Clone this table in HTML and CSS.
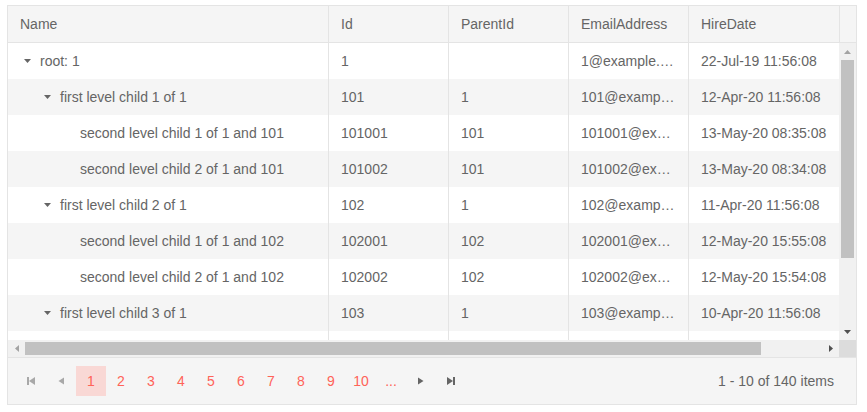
FILE: index.html
```html
<!DOCTYPE html>
<html lang="en">
<head>
<meta charset="utf-8">
<title>TreeList</title>
<link rel="stylesheet" href="styles.css">
</head>
<body>
<div class="grid">
  <div class="head">
    <div class="cols">
      <div class="hcell">Name</div>
      <div class="hcell">Id</div>
      <div class="hcell">ParentId</div>
      <div class="hcell">EmailAddress</div>
      <div class="hcell">HireDate</div>
    </div>
    <div class="head-gap"></div>
  </div>
  <div class="body">
    <div class="rows">
      <div class="row cols">
        <div class="cell name"><span class="caret"><svg viewBox="0 0 16 16" width="16" height="16"><polygon points="4,6 11,6 7.5,10" fill="#656565"/></svg></span>root: 1</div>
        <div class="cell">1</div><div class="cell"></div><div class="cell">1@example.com</div><div class="cell">22-Jul-19 11:56:08</div>
      </div>
      <div class="row cols alt">
        <div class="cell name"><span class="indent"></span><span class="caret"><svg viewBox="0 0 16 16" width="16" height="16"><polygon points="4,6 11,6 7.5,10" fill="#656565"/></svg></span>first level child 1 of 1</div>
        <div class="cell">101</div><div class="cell">1</div><div class="cell">101@example.com</div><div class="cell">12-Apr-20 11:56:08</div>
      </div>
      <div class="row cols">
        <div class="cell name"><span class="indent"></span><span class="indent"></span><span class="indent"></span>second level child 1 of 1 and 101</div>
        <div class="cell">101001</div><div class="cell">101</div><div class="cell">101001@example.com</div><div class="cell">13-May-20 08:35:08</div>
      </div>
      <div class="row cols alt">
        <div class="cell name"><span class="indent"></span><span class="indent"></span><span class="indent"></span>second level child 2 of 1 and 101</div>
        <div class="cell">101002</div><div class="cell">101</div><div class="cell">101002@example.com</div><div class="cell">13-May-20 08:34:08</div>
      </div>
      <div class="row cols">
        <div class="cell name"><span class="indent"></span><span class="caret"><svg viewBox="0 0 16 16" width="16" height="16"><polygon points="4,6 11,6 7.5,10" fill="#656565"/></svg></span>first level child 2 of 1</div>
        <div class="cell">102</div><div class="cell">1</div><div class="cell">102@example.com</div><div class="cell">11-Apr-20 11:56:08</div>
      </div>
      <div class="row cols alt">
        <div class="cell name"><span class="indent"></span><span class="indent"></span><span class="indent"></span>second level child 1 of 1 and 102</div>
        <div class="cell">102001</div><div class="cell">102</div><div class="cell">102001@example.com</div><div class="cell">12-May-20 15:55:08</div>
      </div>
      <div class="row cols">
        <div class="cell name"><span class="indent"></span><span class="indent"></span><span class="indent"></span>second level child 2 of 1 and 102</div>
        <div class="cell">102002</div><div class="cell">102</div><div class="cell">102002@example.com</div><div class="cell">12-May-20 15:54:08</div>
      </div>
      <div class="row cols alt">
        <div class="cell name"><span class="indent"></span><span class="caret"><svg viewBox="0 0 16 16" width="16" height="16"><polygon points="4,6 11,6 7.5,10" fill="#656565"/></svg></span>first level child 3 of 1</div>
        <div class="cell">103</div><div class="cell">1</div><div class="cell">103@example.com</div><div class="cell">10-Apr-20 11:56:08</div>
      </div>
      <div class="row cols">
        <div class="cell name"><span class="indent"></span><span class="indent"></span><span class="indent"></span>second level child 1 of 1 and 103</div>
        <div class="cell">103001</div><div class="cell">103</div><div class="cell">103001@example.com</div><div class="cell">14-May-20 09:12:08</div>
      </div>
    </div>
    <div class="vbar">
      <div class="sb-btn"><svg width="7" height="4" viewBox="0 0 7 4"><polygon points="0,4 7,4 3.5,0" fill="#a3a3a3"/></svg></div>
      <div class="vtrack"><div class="vthumb"></div></div>
      <div class="sb-btn"><svg width="7" height="4" viewBox="0 0 7 4"><polygon points="0,0 7,0 3.5,4" fill="#505050"/></svg></div>
    </div>
  </div>
  <div class="hbar">
    <div class="hscroll">
      <div class="sb-btn hb"><svg width="4" height="7" viewBox="0 0 4 7"><polygon points="4,0 4,7 0,3.5" fill="#a3a3a3"/></svg></div>
      <div class="htrack"><div class="hthumb"></div></div>
      <div class="sb-btn hb"><svg width="4" height="7" viewBox="0 0 4 7"><polygon points="0,0 0,7 4,3.5" fill="#505050"/></svg></div>
    </div>
    <div class="corner"></div>
  </div>
  <div class="pager">
    <span class="pbtn icon disabled"><svg width="16" height="16" viewBox="0 0 16 16"><rect x="4" y="4" width="2" height="8"/><polygon points="12,4 12,12 6,8"/></svg></span>
    <span class="pbtn icon disabled"><svg width="16" height="16" viewBox="0 0 16 16"><polygon points="11,4.5 11,11.5 5.5,8"/></svg></span>
    <span class="pbtn sel">1</span>
    <span class="pbtn">2</span>
    <span class="pbtn">3</span>
    <span class="pbtn">4</span>
    <span class="pbtn">5</span>
    <span class="pbtn">6</span>
    <span class="pbtn">7</span>
    <span class="pbtn">8</span>
    <span class="pbtn">9</span>
    <span class="pbtn">10</span>
    <span class="pbtn">...</span>
    <span class="pbtn icon"><svg width="16" height="16" viewBox="0 0 16 16"><polygon points="5,4.5 5,11.5 10.5,8"/></svg></span>
    <span class="pbtn icon"><svg width="16" height="16" viewBox="0 0 16 16"><polygon points="4,4 4,12 10,8"/><rect x="10" y="4" width="2" height="8"/></svg></span>
    <span class="info">1 - 10 of 140 items</span>
  </div>
</div>
</body>
</html>
```
FILE: styles.css
```css
* { box-sizing: border-box; }
body {
  margin: 0;
  padding: 5px 0 0 7px;
  font-family: "Liberation Sans", Arial, sans-serif;
  font-size: 14px;
  color: #656565;
  background: #fff;
}
.grid {
  width: 850px;
  border: 1px solid #e4e4e4;
  display: flex;
  flex-direction: column;
}
.cols {
  display: grid;
  grid-template-columns: 320px 120px 120px 120px 151px;
  width: 831px;
}
.head {
  display: flex;
  background: #f5f5f5;
  border-bottom: 1px solid #e4e4e4;
}
.hcell {
  padding: 8px 12px;
  line-height: 20px;
  border-left: 1px solid #e4e4e4;
  white-space: nowrap;
  overflow: hidden;
}
.hcell:first-child { border-left: 0; }
.head-gap {
  width: 17px;
  border-left: 1px solid #e4e4e4;
}
.body {
  display: flex;
  height: 297px;
}
.rows {
  width: 831px;
  overflow: hidden;
}
.row { background: #fff; }
.row.alt { background: #f5f5f5; }
.cell {
  padding: 8px 12px;
  line-height: 20px;
  height: 36px;
  border-left: 1px solid #e4e4e4;
  white-space: nowrap;
  overflow: hidden;
  text-overflow: ellipsis;
}
.cell.name {
  border-left: 0;
  display: flex;
  align-items: center;
}
.indent { display: inline-block; width: 20px; flex: none; }
.caret {
  display: inline-flex;
  width: 16px;
  height: 16px;
  margin-right: 4px;
  flex: none;
}
.vbar {
  width: 17px;
  background: #f1f1f1;
  display: flex;
  flex-direction: column;
}
.sb-btn {
  height: 17px;
  width: 17px;
  display: flex;
  align-items: center;
  justify-content: center;
  flex: none;
}
.vtrack {
  flex: 1;
  padding: 0 2px;
}
.vthumb {
  height: 198px;
  background: #c1c1c1;
}
.hbar {
  display: flex;
  height: 17px;
}
.hscroll {
  width: 831px;
  display: flex;
  background: #f1f1f1;
}
.htrack {
  flex: 1;
  padding: 2px 0;
}
.hthumb {
  width: 736px;
  height: 13px;
  background: #c1c1c1;
}
.corner {
  width: 17px;
  background: #dcdcdc;
}
.pager {
  display: flex;
  align-items: center;
  height: 47px;
  border-top: 1px solid #e4e4e4;
  background: #f5f5f5;
  padding: 0 22px 0 8px;
}
.pbtn {
  width: 30px;
  height: 30px;
  display: flex;
  align-items: center;
  justify-content: center;
  color: #ff6358;
  line-height: 20px;
}
.pbtn.sel { background: #f9d8d5; }
.pbtn.icon svg { fill: #656565; }
.pbtn.disabled svg { fill: #a8a8a8; }
.info { margin-left: auto; }
```
